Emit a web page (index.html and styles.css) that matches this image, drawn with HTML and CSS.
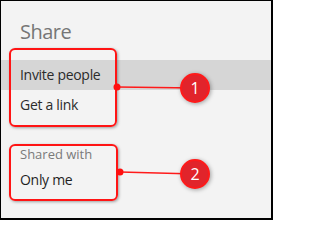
FILE: index.html
```html
<!DOCTYPE html>
<html lang="en">
<head>
<meta charset="utf-8">
<title>Share</title>
<link rel="stylesheet" href="styles.css">
</head>
<body>
<div class="frame">
  <div class="title">Share</div>
  <div class="list">
    <div class="row selected">Invite people</div>
    <div class="row">Get a link</div>
  </div>
  <div class="section">
    <div class="label">Shared with</div>
    <div class="value">Only me</div>
  </div>

  <div class="callout-box box-one"></div>
  <div class="callout-box box-two"></div>
  <svg class="callouts" width="270" height="217" viewBox="0 0 270 217" aria-hidden="true">
    <line x1="116" y1="86" x2="194" y2="87" class="leader"/>
    <circle cx="116" cy="86" r="3.5" class="dot"/>
    <circle cx="194" cy="87" r="14" class="badge"/>
    <text x="194" y="92.5" class="num">1</text>

    <line x1="119" y1="171" x2="194" y2="173" class="leader"/>
    <circle cx="119" cy="171" r="3.5" class="dot"/>
    <circle cx="194" cy="173" r="14" class="badge"/>
    <text x="194" y="178.5" class="num">2</text>
  </svg>
</div>
</body>
</html>
```
FILE: styles.css
```css
html, body {
  margin: 0;
  padding: 0;
  background: #ffffff;
}
body {
  font-family: "Open Sans", "Noto Sans", sans-serif;
}
.frame {
  position: relative;
  box-sizing: border-box;
  width: 273px;
  height: 220px;
  background: #f3f3f3;
  border-top: 1px solid #000;
  border-left: 1px solid #000;
  border-right: 2px solid #000;
  border-bottom: 2px solid #000;
  overflow: hidden;
}
.title {
  padding: 17px 0 0 19px;
  font-size: 20px;
  line-height: 28px;
  letter-spacing: -0.5px;
  color: #767676;
}
.list {
  margin-top: 14px;
}
.row {
  height: 30px;
  line-height: 30px;
  padding-left: 19px;
  font-size: 14px;
  letter-spacing: -0.3px;
  color: #2b2b2b;
}
.row.selected {
  background: #d6d6d6;
}
.section {
  margin-top: 25px;
  padding-left: 19px;
}
.label {
  font-size: 13px;
  line-height: 18px;
  color: #7a7a7a;
}
.value {
  margin-top: 2px;
  font-size: 14px;
  letter-spacing: -0.3px;
  line-height: 30px;
  color: #1f1f1f;
}
.callout-box {
  position: absolute;
  box-sizing: border-box;
  border: 2px solid #ff1414;
  border-radius: 6px;
  box-shadow: 1px 1px 3px rgba(0, 0, 0, 0.35);
}
.box-one {
  left: 8px;
  top: 47px;
  width: 108px;
  height: 79px;
}
.box-two {
  left: 8px;
  top: 143px;
  width: 109px;
  height: 57px;
}
.callouts {
  position: absolute;
  left: 0;
  top: 0;
  overflow: visible;
}
.leader {
  stroke: #ff1a1a;
  stroke-width: 1.6;
}
.dot {
  fill: #ff1010;
}
.badge {
  fill: #e1242b;
  stroke: #ff1a1a;
  stroke-width: 2;
  filter: drop-shadow(1px 1px 2px rgba(0, 0, 0, 0.35));
}
.num {
  fill: #ffffff;
  font-family: "Open Sans", "Noto Sans", sans-serif;
  font-size: 16px;
  text-anchor: middle;
}
```
